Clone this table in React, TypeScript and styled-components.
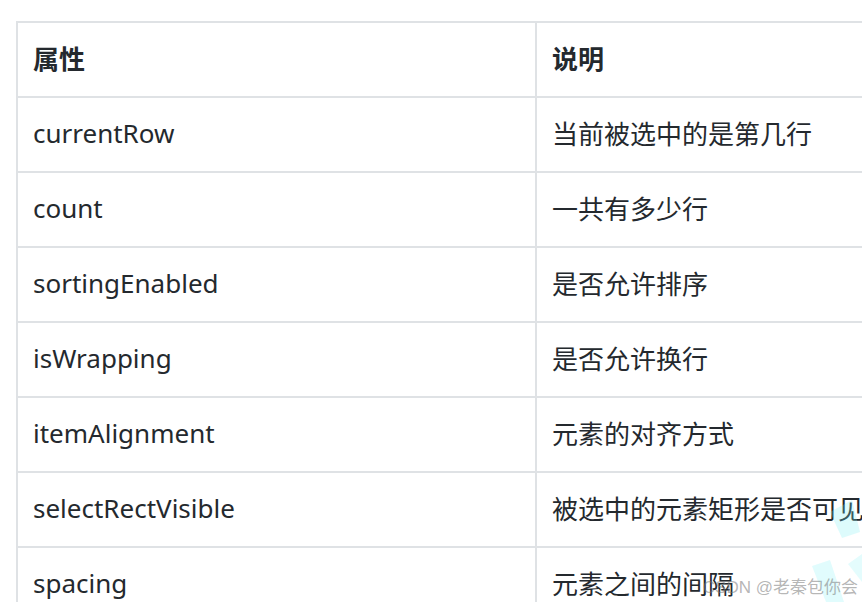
import React from "react";
import styled, { createGlobalStyle } from "styled-components";

const GlobalStyle = createGlobalStyle`
  html, body {
    margin: 0;
    padding: 0;
    background: #fff;
    overflow: hidden;
  }
`;

const Page = styled.div`
  position: relative;
  width: 862px;
  height: 602px;
  overflow: hidden;
  padding: 21px 0 0 16px;
  box-sizing: border-box;
  font-family: "Noto Sans", "Noto Sans CJK SC", sans-serif;
  color: #24292e;
`;

const Table = styled.table`
  border-collapse: collapse;
  width: 1040px;
  table-layout: fixed;
`;

const Cell = styled.td<{ $head?: boolean }>`
  border: 2px solid #dfe2e5;
  height: 75px;
  padding: 0 16px 4px 15px;
  box-sizing: border-box;
  font-size: 26px;
  font-weight: ${(p) => (p.$head ? 700 : 400)};
  text-align: left;
  vertical-align: middle;
  white-space: nowrap;
`;

const Watermark = styled.div`
  position: absolute;
  right: 4px;
  bottom: 4px;
  font-family: "Liberation Sans", "Noto Sans CJK SC", sans-serif;
  font-size: 17px;
  color: rgba(120, 120, 120, 0.55);
`;

const Decor = styled.svg`
  position: absolute;
  right: 0;
  bottom: 0;
`;

const rows: [string, string][] = [
  ["currentRow", "当前被选中的是第几行"],
  ["count", "一共有多少行"],
  ["sortingEnabled", "是否允许排序"],
  ["isWrapping", "是否允许换行"],
  ["itemAlignment", "元素的对齐方式"],
  ["selectRectVisible", "被选中的元素矩形是否可见"],
  ["spacing", "元素之间的间隔"],
];

export default function App() {
  return (
    <Page>
      <GlobalStyle />
      <Table>
        <colgroup>
          <col style={{ width: 519 }} />
          <col />
        </colgroup>
        <tbody>
          <tr>
            <Cell as="th" $head>属性</Cell>
            <Cell as="th" $head>说明</Cell>
          </tr>
          {rows.map(([k, v]) => (
            <tr key={k}>
              <Cell>{k}</Cell>
              <Cell>{v}</Cell>
            </tr>
          ))}
        </tbody>
      </Table>
      <Decor width="80" height="110" viewBox="0 0 80 110">
        <path d="M48 20 L70 8 L78 40 L60 46 Z" fill="rgba(120,240,245,0.25)" />
        <path d="M30 74 L48 68 L62 110 L44 110 Z" fill="rgba(120,240,245,0.22)" />
        <path d="M66 72 L80 62 L80 90 Z" fill="rgba(120,240,245,0.2)" />
      </Decor>
      <Watermark>CSDN @老秦包你会</Watermark>
    </Page>
  );
}
